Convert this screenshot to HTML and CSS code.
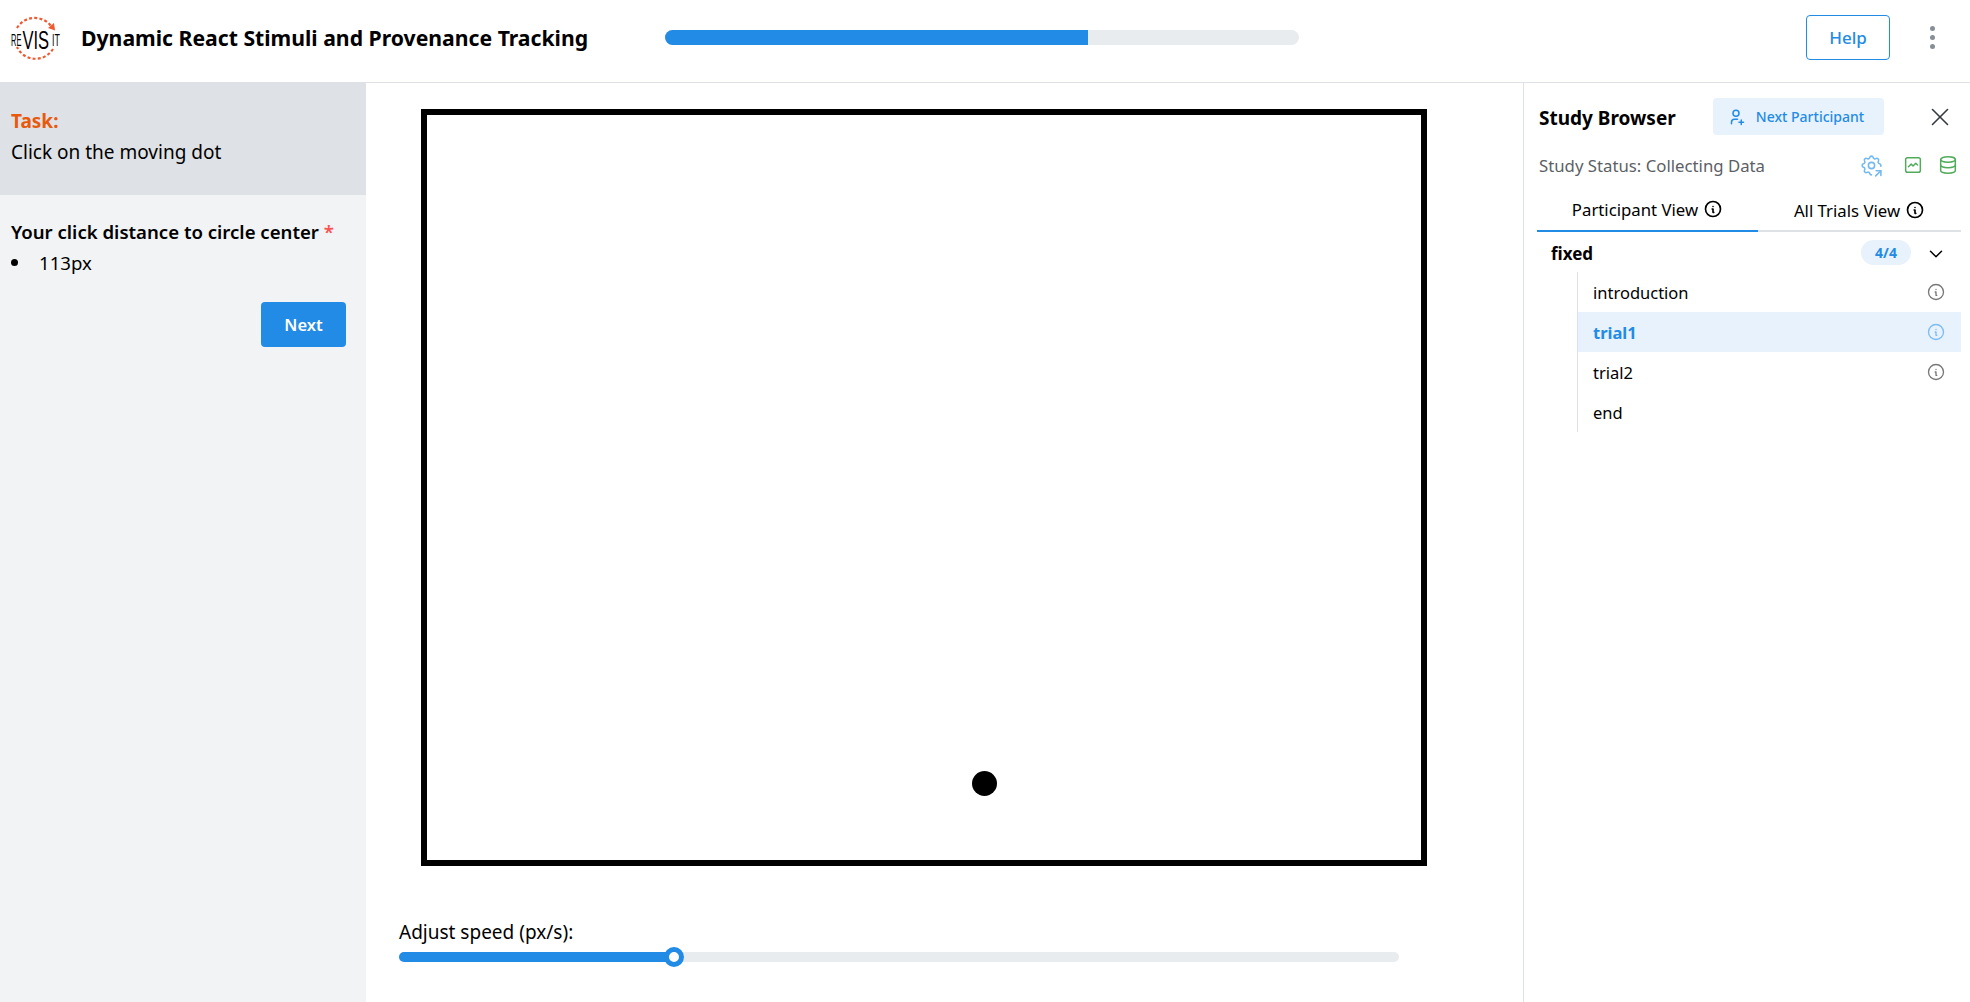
FILE: index.html
```html
<!DOCTYPE html>
<html lang="en">
<head>
    <meta charset="UTF-8">
    <title>Dynamic React Stimuli and Provenance Tracking</title>
    <link rel="stylesheet" href="styles.css">
</head>
<body>
    <header class="topbar">
        <div class="brand">
            <svg class="logo" width="56" height="48" viewBox="0 0 56 48">
                <path d="M9 14A20.5 20.5 0 0 1 43 12" fill="none" stroke="#f05a30" stroke-width="2.2" stroke-dasharray="3 2.2"/>
                <path d="M45 35A20.5 20.5 0 0 1 9 33" fill="none" stroke="#f05a30" stroke-width="2.2" stroke-dasharray="3 2.2"/>
                <path d="M47 16.5l-1 -7.5l-6 5z" fill="#f05a30"/>
                <text class="logo-small" transform="translate(3 31.5) scale(.44 1)">RE</text>
                <text class="logo-big" transform="translate(14.5 35) scale(.66 1)">VIS</text>
                <text class="logo-small" transform="translate(44 31.5) scale(.52 1)">IT</text>
            </svg>
            <h1 class="title">Dynamic React Stimuli and Provenance Tracking</h1>
        </div>
        <div class="progress"><div class="progress-fill"></div></div>
        <div class="top-actions">
            <button class="help-btn">Help</button>
            <span class="dots"><i></i><i></i><i></i></span>
        </div>
    </header>

    <main class="layout">
        <aside class="left-panel">
            <div class="task-box">
                <div class="task-label">Task:</div>
                <div>Click on the moving dot</div>
            </div>
            <div class="response">
                <div class="question">Your click distance to circle center <span class="required">*</span></div>
                <ul class="answers"><li>113px</li></ul>
                <div class="next-row"><button class="next-btn">Next</button></div>
            </div>
        </aside>

        <section class="stimulus">
            <div class="canvas-box">
                <div class="dot"></div>
            </div>
            <div class="speed">
                <label class="speed-label">Adjust speed (px/s):</label>
                <div class="slider">
                    <div class="slider-fill"></div>
                    <div class="slider-thumb"></div>
                </div>
            </div>
        </section>

        <aside class="browser">
            <div class="browser-head">
                <span class="browser-title">Study Browser</span>
                <button class="participant-btn">
                    <svg class="icon" width="18" height="18" viewBox="0 0 24 24"><path d="M8 7a4 4 0 1 0 8 0a4 4 0 0 0 -8 0"/><path d="M16 19h6"/><path d="M19 16v6"/><path d="M6 21v-2a4 4 0 0 1 4 -4h4"/></svg>
                    Next Participant
                </button>
                <svg class="icon close" width="30" height="30" viewBox="0 0 24 24"><path d="M18 6l-12 12"/><path d="M6 6l12 12"/></svg>
            </div>
            <div class="status-row">
                <span class="status-text">Study Status: Collecting Data</span>
                <svg class="icon status-blue" width="25" height="25" viewBox="0 0 24 24"><path d="M12.004 21c-.732 .002 -1.466 -.437 -1.679 -1.317a1.724 1.724 0 0 0 -2.573 -1.066c-1.543 .94 -3.31 -.826 -2.37 -2.37a1.724 1.724 0 0 0 -1.065 -2.572c-1.756 -.426 -1.756 -2.924 0 -3.35a1.724 1.724 0 0 0 1.066 -2.573c-.94 -1.543 .826 -3.31 2.37 -2.37c1 .608 2.296 .07 2.572 -1.065c.426 -1.756 2.924 -1.756 3.35 0a1.724 1.724 0 0 0 2.573 1.066c1.543 -.94 3.31 .826 2.37 2.37a1.724 1.724 0 0 0 1.065 2.572c1.122 .272 1.53 1.393 1.22 2.304"/><path d="M9 12a3 3 0 1 0 6 0a3 3 0 0 0 -6 0"/><path d="M16 22l5 -5"/><path d="M21 21.5v-4.5h-4.5"/></svg>
                <svg class="icon status-green chart" width="22" height="22" viewBox="0 0 24 24"><path d="M4 6a2 2 0 0 1 2 -2h12a2 2 0 0 1 2 2v12a2 2 0 0 1 -2 2h-12a2 2 0 0 1 -2 -2z"/><path d="M7 14l3 -3l2 2l3 -3l2 2"/></svg>
                <svg class="icon status-green" width="22" height="22" viewBox="0 0 24 24"><path d="M4 6a8 3 0 1 0 16 0a8 3 0 1 0 -16 0"/><path d="M4 6v6a8 3 0 0 0 16 0v-6"/><path d="M4 12v6a8 3 0 0 0 16 0v-6"/></svg>
            </div>
            <div class="tabs">
                <div class="tab active">Participant View
                    <svg class="icon" width="20" height="20" viewBox="0 0 24 24"><path d="M3 12a9 9 0 1 0 18 0a9 9 0 0 0 -18 0"/><path d="M12 9h.01"/><path d="M11 12h1v4h1"/></svg>
                </div>
                <div class="tab rest">All Trials View
                    <svg class="icon" width="20" height="20" viewBox="0 0 24 24"><path d="M3 12a9 9 0 1 0 18 0a9 9 0 0 0 -18 0"/><path d="M12 9h.01"/><path d="M11 12h1v4h1"/></svg>
                </div>
            </div>
            <div class="seq-head">
                <span class="seq-name">fixed</span>
                <span class="badge">4/4</span>
                <svg class="icon chevron" width="22" height="22" viewBox="0 0 24 24"><path d="M6 9l6 6l6 -6"/></svg>
            </div>
            <ul class="seq-list">
                <li class="seq-item">introduction
                    <svg class="icon" width="20" height="20" viewBox="0 0 24 24"><path d="M3 12a9 9 0 1 0 18 0a9 9 0 0 0 -18 0"/><path d="M12 9h.01"/><path d="M11 12h1v4h1"/></svg>
                </li>
                <li class="seq-item current">trial1
                    <svg class="icon" width="20" height="20" viewBox="0 0 24 24"><path d="M3 12a9 9 0 1 0 18 0a9 9 0 0 0 -18 0"/><path d="M12 9h.01"/><path d="M11 12h1v4h1"/></svg>
                </li>
                <li class="seq-item">trial2
                    <svg class="icon" width="20" height="20" viewBox="0 0 24 24"><path d="M3 12a9 9 0 1 0 18 0a9 9 0 0 0 -18 0"/><path d="M12 9h.01"/><path d="M11 12h1v4h1"/></svg>
                </li>
                <li class="seq-item">end</li>
            </ul>
        </aside>
    </main>
</body>
</html>
```

FILE: styles.css
```css
* {
    box-sizing: border-box;
}
html, body {
    height: 100%;
}
body {
    font-family: "Noto Sans", "Open Sans", sans-serif;
    font-size: 16px;
    margin: 0;
    overflow: hidden;
    background-color: white;
    color: black;
    display: flex;
    flex-direction: column;
}
button {
    font-family: inherit;
    cursor: pointer;
}
.icon {
    fill: none;
    stroke: currentColor;
    stroke-width: 2;
    stroke-linecap: round;
    stroke-linejoin: round;
    flex-shrink: 0;
}

/* top bar */
.topbar {
    height: 83px;
    flex-shrink: 0;
    display: flex;
    align-items: center;
    border-bottom: 1px solid #dee2e6;
    padding: 0 16px 7px 8px;
}
.brand {
    display: flex;
    align-items: center;
    width: 657px;
    gap: 17px;
}
.logo-small {
    font-family: "Liberation Sans", sans-serif;
    font-size: 17px;
}
.logo-big {
    font-family: "Liberation Sans", sans-serif;
    font-size: 25px;
}
.title {
    font-size: 21.2px;
    font-weight: 700;
    margin: 0;
    white-space: nowrap;
}
.progress {
    width: 634px;
    height: 15px;
    border-radius: 8px;
    background: #e9ecef;
    overflow: hidden;
}
.progress-fill {
    width: 423px;
    height: 100%;
    background: #228be6;
}
.top-actions {
    margin-left: auto;
    display: flex;
    align-items: center;
    gap: 40px;
}
.help-btn {
    width: 84px;
    height: 45px;
    background: white;
    border: 1px solid #228be6;
    border-radius: 4px;
    color: #228be6;
    font-size: 17px;
    font-weight: 500;
}
.dots {
    display: flex;
    flex-direction: column;
    gap: 4px;
    margin-right: 19px;
}
.dots i {
    width: 5px;
    height: 5px;
    border-radius: 50%;
    background: #868e96;
}

/* main columns */
.layout {
    flex: 1;
    display: flex;
    min-height: 0;
}
.left-panel {
    width: 366px;
    margin-top: -1px;
    background: #f1f3f5;
    flex-shrink: 0;
}
.task-box {
    height: 113px;
    background: #dee2e6;
    padding: 24px 11px;
    line-height: 31px;
    font-size: 19px;
}
.task-label {
    color: #e8590c;
    font-weight: 700;
}
.response {
    padding: 21px 11px;
}
.question {
    font-size: 18.6px;
    font-weight: 600;
    line-height: 31px;
    white-space: nowrap;
}
.required {
    color: #fa5252;
}
.answers {
    list-style: none;
    margin: 0;
    padding: 0;
    font-size: 18.6px;
    line-height: 31px;
}
.answers li {
    display: flex;
    align-items: center;
}
.answers li::before {
    content: "";
    width: 7px;
    height: 7px;
    border-radius: 50%;
    background: black;
    margin: 0 21px 0 0;
}
.next-row {
    display: flex;
    justify-content: flex-end;
    padding: 24px 9px 0 0;
}
.next-btn {
    width: 85px;
    height: 45px;
    border: none;
    border-radius: 4px;
    background: #228be6;
    color: white;
    font-size: 16.5px;
    font-weight: 600;
}

/* stimulus */
.stimulus {
    flex: 1;
    padding: 26px 0 0 33px;
}
.canvas-box {
    width: 1006px;
    height: 757px;
    margin-left: 22px;
    border: 6px solid black;
    display: flex;
    align-items: flex-end;
    padding: 0 0 64px 545px;
}
.dot {
    width: 25px;
    height: 25px;
    border-radius: 50%;
    background: black;
}
.speed {
    width: 1000px;
    margin-top: 53px;
}
.speed-label {
    display: block;
    font-size: 19px;
    line-height: 26px;
}
.slider {
    position: relative;
    height: 10px;
    margin-top: 7px;
    border-radius: 5px;
    background: #e9ecef;
}
.slider-fill {
    width: 275px;
    height: 100%;
    border-radius: 5px;
    background: #228be6;
}
.slider-thumb {
    position: absolute;
    left: 265px;
    top: -5px;
    width: 20px;
    height: 20px;
    border-radius: 50%;
    border: 5px solid #228be6;
    background: white;
}

/* study browser */
.browser {
    width: 447px;
    flex-shrink: 0;
    border-left: 1px solid #dee2e6;
    padding: 15px 9px 0 13px;
}
.browser-head {
    display: flex;
    align-items: center;
    height: 37px;
}
.browser-title {
    font-size: 19px;
    font-weight: 700;
    padding: 2px 0 0 2px;
    width: 176px;
}
.participant-btn {
    width: 171px;
    height: 37px;
    border: none;
    border-radius: 4px;
    background: #e7f2fc;
    color: #228be6;
    font-size: 14px;
    font-weight: 500;
    display: flex;
    align-items: center;
    justify-content: center;
    gap: 11px;
    padding: 0 6px 0 0;
}
.close {
    margin-left: 41px;
    color: #343a40;
    stroke-width: 1.3;
}
.status-row {
    display: flex;
    align-items: center;
    height: 30px;
    margin-top: 15px;
    padding-left: 2px;
    color: #5c5f66;
}
.status-text {
    font-size: 16.75px;
    width: 320px;
}
.status-blue {
    color: #74b9f0;
    stroke-width: 1.5;
}
.status-green {
    color: #51ab5a;
    stroke-width: 1.6;
}
.chart {
    margin-left: 18px;
    margin-right: 13px;
}
.tabs {
    display: flex;
    margin-top: 10px;
    height: 42px;
    border-bottom: 2px solid #dee2e6;
}
.tab {
    display: flex;
    align-items: center;
    justify-content: center;
    gap: 5px;
    font-size: 16.75px;
    padding-bottom: 2px;
    margin-bottom: -2px;
}
.tab.active {
    width: 221px;
    border-bottom: 2px solid #228be6;
}
.tab.rest {
    flex: 1;
}
.seq-head {
    display: flex;
    align-items: center;
    height: 40px;
    padding-left: 14px;
}
.seq-name {
    font-size: 17px;
    font-weight: 700;
    flex: 1;
    padding-top: 2px;
}
.badge {
    width: 50px;
    height: 25px;
    border-radius: 13px;
    background: #e7f2fc;
    color: #228be6;
    font-size: 14px;
    font-weight: 700;
    display: flex;
    align-items: center;
    justify-content: center;
}
.chevron {
    margin: 3px 14px 0;
    stroke-width: 1.6;
}
.seq-list {
    list-style: none;
    margin: 0 0 0 40px;
    padding: 0;
    border-left: 1px solid #dee2e6;
}
.seq-item {
    height: 40px;
    display: flex;
    align-items: center;
    justify-content: space-between;
    padding: 0 15px;
    font-size: 16.5px;
}
.seq-item .icon {
    color: #777;
    stroke-width: 1.6;
}
.seq-item.current {
    background: #e7f2fc;
    color: #228be6;
    font-weight: 700;
}
.seq-item.current .icon {
    color: #7dbcf2;
}
```
